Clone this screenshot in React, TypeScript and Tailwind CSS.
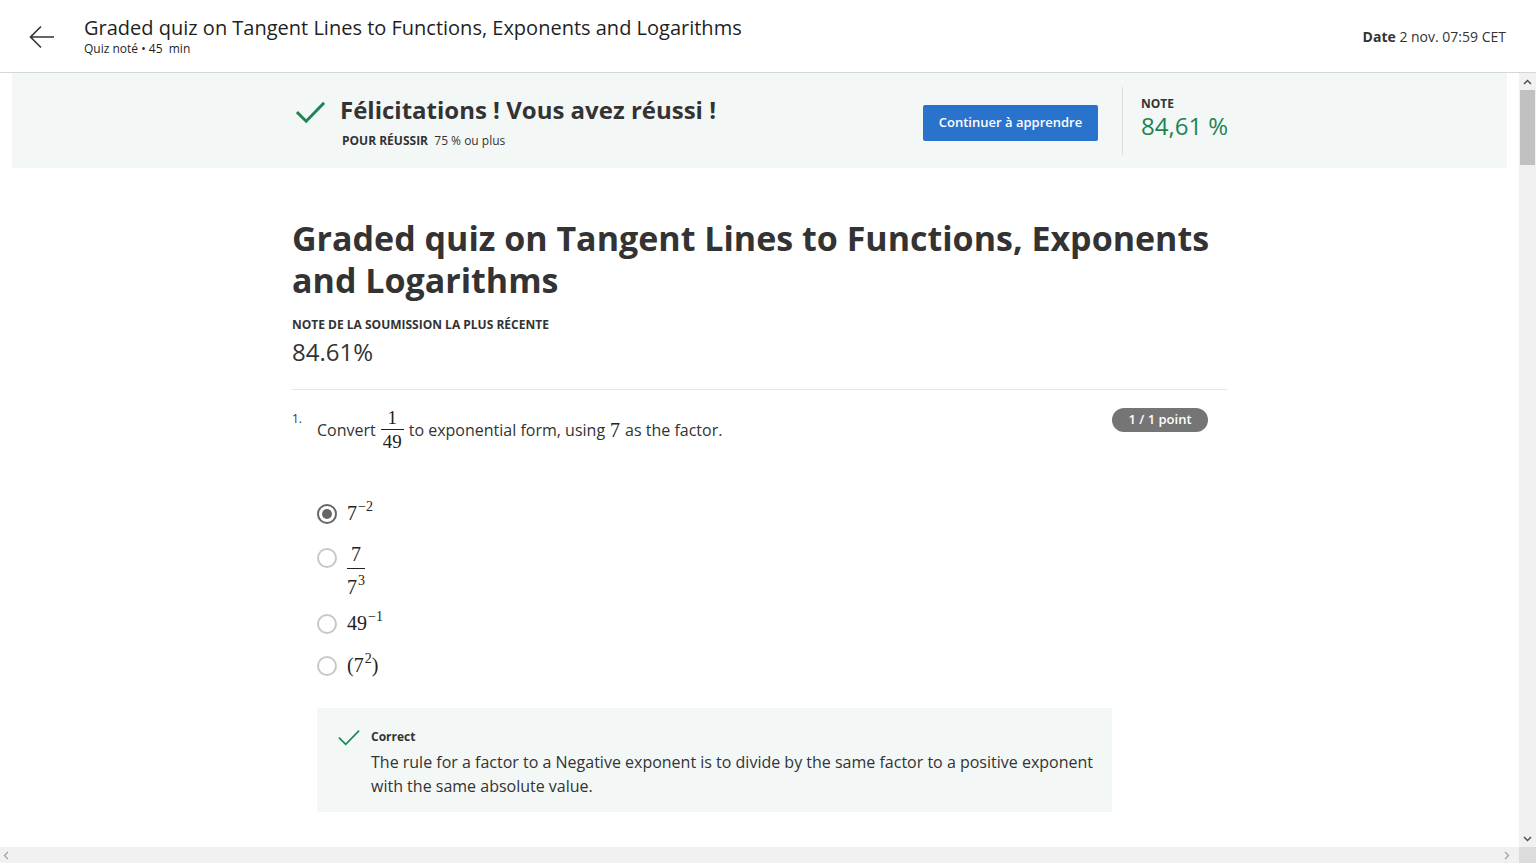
import React from "react";

const OS = { fontFamily: '"Open Sans", "Noto Sans", sans-serif' };
const SERIF = { fontFamily: '"Liberation Serif", "DejaVu Serif", serif' };

function Check({ size = 28, stroke = 3 }: { size?: number; stroke?: number }) {
  return (
    <svg width={size} height={size * 0.8} viewBox="0 0 30 24" fill="none">
      <path d="M2 12.5 L10.5 21 L28 3" stroke="#1f8354" strokeWidth={stroke} strokeLinecap="square" />
    </svg>
  );
}

function Radio({ checked }: { checked?: boolean }) {
  return (
    <div
      className={
        "w-[20px] h-[20px] rounded-full border-2 flex items-center justify-center shrink-0 " +
        (checked ? "border-[#666666]" : "border-[#c8c8c8]")
      }
    >
      {checked && <div className="w-[10px] h-[10px] rounded-full bg-[#666666]" />}
    </div>
  );
}

function Sup({ children }: { children: React.ReactNode }) {
  return <span className="text-[14px] relative top-[-9px] ml-[1px]">{children}</span>;
}

export default function App() {
  return (
    <div className="w-[1536px] h-[863px] flex flex-col overflow-hidden bg-white text-[#1f1f1f]" style={OS}>
      {/* Header */}
      <header className="h-[73px] shrink-0 border-b border-[#d6d6d6] flex items-center pl-[28px] pr-[30px]">
        <svg width="28" height="28" viewBox="0 0 28 28" fill="none" className="mr-[28px] mt-[1px]">
          <path d="M26 14 H3 M13 3.5 L2.5 14 L13 24.5" stroke="#333" strokeWidth="1.6" />
        </svg>
        <div className="flex flex-col mt-[-1px]">
          <div className="text-[20px] leading-[26px] text-[#1f1f1f]">
            Graded quiz on Tangent Lines to Functions, Exponents and Logarithms
          </div>
          <div className="text-[12px] leading-[16px] text-[#1f1f1f]">Quiz noté • 45&nbsp; min</div>
        </div>
        <div className="ml-auto text-[14px] text-[#333] mt-[0px]">
          <span className="font-bold">Date</span> 2 nov. 07:59 CET
        </div>
      </header>

      <div className="flex flex-1 min-h-0">
        <div className="flex-1 overflow-hidden">
          {/* Banner */}
          <div className="px-[12px]">
            <div className="h-[95px] bg-[#f3f8f7]">
              <div className="w-[935px] mx-auto h-full flex items-center">
                <div className="ml-[4px] mt-[-16px] shrink-0">
                  <Check size={29} stroke={3} />
                </div>
                <div className="ml-[15px] flex flex-col mt-[2px]">
                  <div className="text-[24px] font-bold leading-[32px] text-[#333]">
                    Félicitations ! Vous avez réussi !
                  </div>
                  <div className="text-[12px] leading-[18px] mt-[6px] ml-[2px] text-[#333]">
                    <span className="font-bold">POUR RÉUSSIR</span>&nbsp; 75 % ou plus
                  </div>
                </div>
                <div className="ml-auto flex items-center h-full">
                  <button className="h-[36px] w-[175px] mt-[5px] bg-[#2a73cc] text-white text-[13px] font-semibold rounded-[2px]">
                    Continuer à apprendre
                  </button>
                  <div className="w-px h-[68px] bg-[#dcdcdc] ml-[24px]" />
                  <div className="ml-[18px] w-[86px] flex flex-col mt-[-5px] whitespace-nowrap">
                    <div className="text-[12px] font-bold leading-[16px] text-[#333]">NOTE</div>
                    <div className="text-[24px] leading-[28px] text-[#1f8354]">84,61 %</div>
                  </div>
                </div>
              </div>
            </div>
          </div>

          {/* Content */}
          <div className="w-[935px] mx-auto pt-[50px]">
            <h1 className="text-[34px] font-bold leading-[42px] text-[#333] mt-[-1px]">
              Graded quiz on Tangent Lines to Functions, Exponents and Logarithms
            </h1>
            <div className="mt-[16px] text-[12px] font-bold leading-[16px] text-[#333]">
              NOTE DE LA SOUMISSION LA PLUS RÉCENTE
            </div>
            <div className="mt-[4px] text-[24px] leading-[30px] text-[#333]">84.61%</div>
            <div className="mt-[22px] h-px bg-[#e5e5e5]" />

            {/* Question */}
            <div className="flex mt-[18px]">
              <div className="w-[25px] shrink-0 text-[12px] leading-[22px] text-[#333]">1.</div>
              <div className="flex-1">
                <div className="flex items-center text-[16px] text-[#333] mt-[0px]">
                  <span>Convert</span>
                  <span className="inline-flex flex-col items-center mx-[5px] text-[19px] leading-[19px] text-[#222]" style={SERIF}>
                    <span className="px-[2px]">1</span>
                    <span className="w-full h-px bg-[#222] my-[2px]" />
                    <span className="px-[2px]">49</span>
                  </span>
                  <span>to exponential form, using</span>
                  <span className="mx-[5px] text-[20px] text-[#222]" style={SERIF}>7</span>
                  <span>as the factor.</span>
                </div>

                <div className="flex flex-col mt-[51px]">
                  <div className="flex items-center h-[24px] gap-[10px]">
                    <Radio checked />
                    <span className="text-[20px] text-[#222] leading-[24px]" style={SERIF}>
                      7<Sup>−2</Sup>
                    </span>
                  </div>
                  <div className="flex items-start mt-[20px] gap-[10px]">
                    <div className="mt-[2px]"><Radio /></div>
                    <span className="inline-flex flex-col items-center text-[20px] leading-[20px] text-[#222] mt-[-2px]" style={SERIF}>
                      <span>7</span>
                      <span className="w-full h-px bg-[#222] my-[4px]" />
                      <span className="mt-[4px]">
                        7<Sup>3</Sup>
                      </span>
                    </span>
                  </div>
                  <div className="flex items-center h-[24px] gap-[10px] mt-[12px]">
                    <Radio />
                    <span className="text-[20px] text-[#222] leading-[24px]" style={SERIF}>
                      49<Sup>−1</Sup>
                    </span>
                  </div>
                  <div className="flex items-center h-[24px] gap-[10px] mt-[18px]">
                    <Radio />
                    <span className="text-[20px] text-[#222] leading-[24px]" style={SERIF}>
                      (7<Sup>2</Sup>)
                    </span>
                  </div>
                </div>

                <div className="mt-[30px] w-[795px] bg-[#f3f8f7] pt-[20px] pb-[14px] pl-[21px] pr-[16px] flex">
                  <div className="mt-[1px]">
                    <Check size={22} stroke={2.2} />
                  </div>
                  <div className="ml-[11px] flex flex-col">
                    <div className="text-[12px] font-bold leading-[18px] text-[#333]">Correct</div>
                    <div className="text-[16px] leading-[24px] text-[#333] mt-[4px]">
                      The rule for a factor to a Negative exponent is to divide by the same factor to a positive exponent
                      with the same absolute value.
                    </div>
                  </div>
                </div>
              </div>
              <div className="ml-auto mr-[19px] shrink-0">
                <div className="h-[24px] w-[96px] justify-center rounded-full bg-[#757575] text-white text-[13px] font-semibold flex items-center">
                  1 / 1 point
                </div>
              </div>
            </div>
          </div>
        </div>

        {/* Vertical scrollbar */}
        <div className="w-[17px] bg-[#f1f1f1] flex flex-col items-center shrink-0">
          <div className="h-[17px] flex items-center justify-center">
            <svg width="9" height="6" viewBox="0 0 9 6"><path d="M1 5 L4.5 1.5 L8 5" stroke="#505050" strokeWidth="1.5" fill="none" /></svg>
          </div>
          <div className="w-[15px] h-[75px] bg-[#c1c1c1]" />
          <div className="flex-1" />
          <div className="h-[17px] flex items-center justify-center">
            <svg width="9" height="6" viewBox="0 0 9 6"><path d="M1 1 L4.5 4.5 L8 1" stroke="#505050" strokeWidth="1.5" fill="none" /></svg>
          </div>
        </div>
      </div>

      {/* Horizontal scrollbar */}
      <div className="h-[16px] shrink-0 flex bg-[#f1f1f1]">
        <div className="flex-1 flex items-center justify-between px-[3px]">
          <svg width="6" height="9" viewBox="0 0 6 9"><path d="M5 1 L1.5 4.5 L5 8" stroke="#a3a3a3" strokeWidth="1.3" fill="none" /></svg>
          <svg width="6" height="9" viewBox="0 0 6 9" className="mr-[6px]"><path d="M1 1 L4.5 4.5 L1 8" stroke="#a3a3a3" strokeWidth="1.3" fill="none" /></svg>
        </div>
        <div className="w-[17px] bg-[#dcdcdc]" />
      </div>
    </div>
  );
}
